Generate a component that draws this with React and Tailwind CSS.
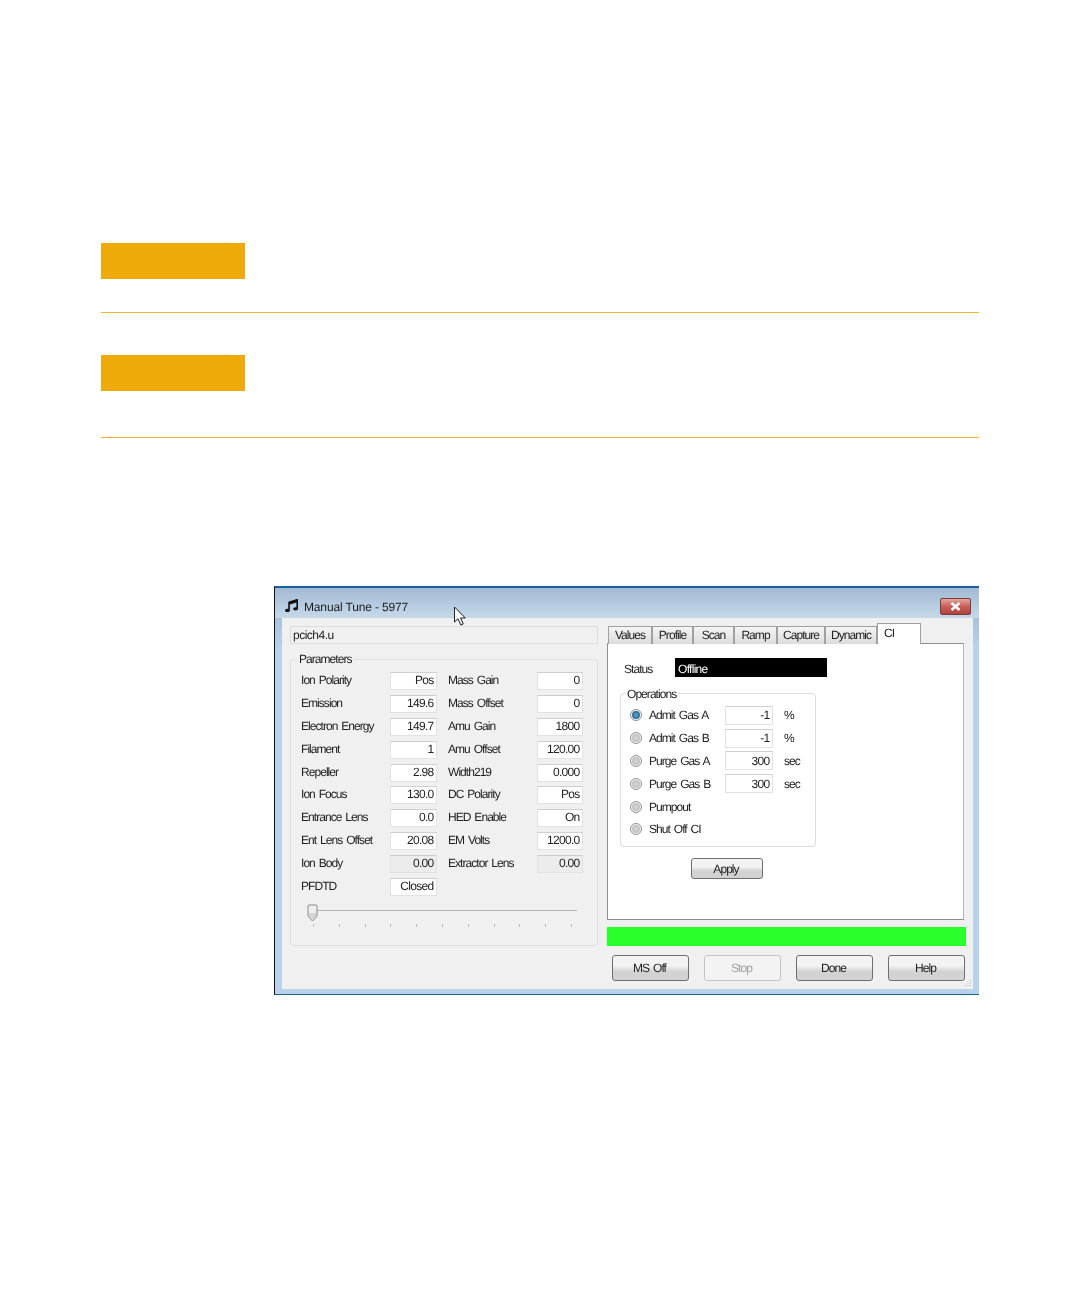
import { FaMusic } from "react-icons/fa";

const leftRows = [
  ["Ion Polarity", "Pos", "Mass Gain", "0"],
  ["Emission", "149.6", "Mass Offset", "0"],
  ["Electron Energy", "149.7", "Amu Gain", "1800"],
  ["Filament", "1", "Amu Offset", "120.00"],
  ["Repeller", "2.98", "Width219", "0.000"],
  ["Ion Focus", "130.0", "DC Polarity", "Pos"],
  ["Entrance Lens", "0.0", "HED Enable", "On"],
  ["Ent Lens Offset", "20.08", "EM Volts", "1200.0"],
  ["Ion Body", "0.00", "Extractor Lens", "0.00", true],
  ["PFDTD", "Closed"],
];

const tabs = [
  ["Values", "w-[44px]"],
  ["Profile", "w-[41px]"],
  ["Scan", "w-[41px]"],
  ["Ramp", "w-[43px]"],
  ["Capture", "w-[48px]"],
  ["Dynamic", "w-[52px]"],
];

const ops = [
  ["Admit Gas A", "-1", "%", true],
  ["Admit Gas B", "-1", "%"],
  ["Purge Gas A", "300", "sec"],
  ["Purge Gas B", "300", "sec"],
  ["Pumpout"],
  ["Shut Off CI"],
];

const Field = ({ value, disabled, width = "w-[47px]" }) => (
  <div
    className={`${width} h-[18px] flex items-center justify-end pr-[2.5px] tracking-[-0.7px] border border-[#e2e2e2] border-t-[#cfcfcf] ${
      disabled ? "bg-[#ececec] border-[#cccccc]" : "bg-white"
    }`}
  >
    {value}
  </div>
);

const Radio = ({ checked }) => (
  <div className="w-[12px] h-[12px] rounded-full border border-[#929292] bg-[#f4f4f4] flex items-center justify-center">
    <div
      className={`w-[8px] h-[8px] rounded-full ${
        checked ? "bg-radial from-[#5aa9d6] to-[#0f4f78]" : "bg-radial from-[#d8d8d8] to-[#b4b4b4]"
      }`}
    />
  </div>
);

const Button = ({ label, disabled, className = "w-[77px] h-[26px]" }) => (
  <div
    className={`${className} rounded-[3px] flex items-center justify-center pr-[2px] border ${
      disabled
        ? "border-[#c4c4c4] bg-[#f3f3f3] text-[#9f9f9f]"
        : "border-[#6f6f6f] bg-linear-to-b from-[#f3f3f3] from-40% to-[#d2d2d2] to-65%"
    }`}
  >
    {label}
  </div>
);

const App = () => {
  return (
    <div className="w-[1080px] h-[1296px] bg-white pt-[243px] pl-[101px] font-['Liberation_Sans',sans-serif]">
      <div className="w-[144px] h-[36px] bg-[#eeaa08]" />
      <div className="w-[878px] h-px bg-[#ecb634] mt-[33px]" />
      <div className="w-[144px] h-[36px] bg-[#eeaa08] mt-[42px]" />
      <div className="w-[878px] h-px bg-[#ecb634] mt-[46px]" />

      <div className="relative w-[705px] h-[409px] mt-[148px] ml-[173px] border-t-2 border-t-[#1d5f96] border-l border-l-[#111111] border-b border-b-[#1b6a8c] bg-linear-to-b from-[#a6bdd6] from-[5%] to-[#b9d1ea] to-[15%] text-[12px] tracking-[-0.95px] [word-spacing:1.5px] [text-rendering:geometricPrecision] text-[#222222] leading-none blur-[0.35px]">
        <div className="h-[30px] flex items-center pl-[10px] bg-linear-to-b from-[#a3bad4] to-[#c6d9ea]">
          <FaMusic className="w-[13px] h-[13px] text-[#111111] mt-[4px]" />
          <span className="ml-[6px] text-[12px] tracking-[-0.15px] [word-spacing:0px] text-[#1c1c1c] mt-[8px]">Manual Tune - 5977</span>
          <svg className="absolute z-10 left-[178px] top-[18px] w-[15px] h-[21px]" viewBox="0 0 15 21">
            <path d="M1.5 1 V16 L5 12.8 L7.8 19 L10.3 18 L7.6 12 H12.3 Z" fill="#f4f8fb" stroke="#222222" strokeWidth="1" />
          </svg>
          <div className="absolute left-[665px] top-[10px] w-[31px] h-[17px] rounded-[2px] border border-[#7b3a38] bg-linear-to-b from-[#e0a49c] via-[#c8605a] to-[#b0403c] flex items-center justify-center">
            <svg className="w-[11px] h-[9px]" viewBox="0 0 11 9">
              <path d="M1.5 1 L9.5 8 M9.5 1 L1.5 8" stroke="#ffffff" strokeWidth="2.4" />
            </svg>
          </div>
        </div>

        <div className="relative mx-[7px] w-[691px] h-[371px] bg-[#f0f0f0] flex">
          <div className="ml-[8px] w-[308px] pt-[8px]">
            <div className="h-[18px] border border-[#dcdcdc] flex items-center pl-[2px] tracking-[-0.5px]">pcich4.u</div>
            <div className="relative mt-[15px] h-[287px] rounded-[3px] border border-[#e0e0e0] pt-[10px] pl-[10px]">
              <span className="absolute left-[6px] -top-[7px] px-[2px] bg-[#f0f0f0]">Parameters</span>
              {leftRows.map((row) => (
                <div key={row[0]} className="flex items-center h-[22.8px]">
                  <div className="w-[89px] whitespace-nowrap pb-[2px]">{row[0]}</div>
                  <Field value={row[1]} disabled={row[4]} width="w-[47px] pb-[2px]" />
                  {row[2] && (
                    <>
                      <div className="w-[89px] ml-[11px] whitespace-nowrap pb-[2px]">{row[2]}</div>
                      <Field value={row[3]} disabled={row[4]} width="w-[46px] pb-[2px]" />
                    </>
                  )}
                </div>
              ))}
              <div className="relative h-[34px] ml-[12px] w-[264px] mt-[6px]">
                <div className="absolute left-0 right-0 top-[6px] h-px bg-[#b5b5b5]" />
                <svg className="absolute -left-[6px] top-0 w-[11px] h-[18px]" viewBox="0 0 11 18">
                  <path d="M1 2 Q1 1 2 1 H9 Q10 1 10 2 V12 L5.5 17 L1 12 Z" fill="#eeeeee" stroke="#8a8a8a" />
                  <path d="M2 9 H9 V12 L5.5 15.5 L2 12 Z" fill="#d4d4d4" />
                </svg>
                <div className="absolute left-0 w-[259px] top-[20px] flex justify-between">
                  {[0, 1, 2, 3, 4, 5, 6, 7, 8, 9, 10].map((t) => (
                    <div key={t} className="w-px h-[3px] bg-[#b8b8b8]" />
                  ))}
                </div>
              </div>
            </div>
          </div>

          <div className="ml-[9px] w-[359px] pt-[5px]">
            <div className="flex items-end h-[21px] pl-[1px]">
              {tabs.map(([label, w]) => (
                <div
                  key={label}
                  className={`${w} h-[18px] flex items-center justify-center pb-[2px] border border-b-0 border-[#a0a0a0] bg-linear-to-b from-[#f4f4f4] to-[#dcdcdc]`}
                >
                  {label}
                </div>
              ))}
              <div className="relative z-10 w-[44px] h-[21px] border border-b-0 border-[#a0a0a0] bg-white pl-[6px] pt-[3px]">CI</div>
            </div>
            <div className="w-[357px] h-[277px] -mt-px bg-white border border-[#8e8e8e] border-r-[#b4b4b4] pt-[15px]">
              <div className="flex items-center pl-[16px]">
                <div className="w-[51px] mt-[1px]">Status</div>
                <div className="w-[152px] h-[19px] bg-black text-white flex items-center pl-[3px] pt-[2px] -mt-[1px] tracking-[-0.7px]">Offline</div>
              </div>
              <div className="relative mt-[16px] ml-[12px] w-[196px] h-[154px] rounded-[4px] border border-[#dcdcdc] pt-[10px] pl-[9px]">
                <span className="absolute left-[4px] -top-[6px] px-[2px] bg-white">Operations</span>
                {ops.map(([label, value, unit, checked]) => (
                  <div key={label} className="flex items-center h-[22.8px]">
                    <Radio checked={checked} />
                    <div className="w-[76px] ml-[7px] whitespace-nowrap">{label}</div>
                    {value && <Field value={value} width="w-[48px] h-[19px]" />}
                    {unit && <div className="ml-[11px]">{unit}</div>}
                  </div>
                ))}
              </div>
              <div className="mt-[11px] ml-[83px]">
                <Button label="Apply" className="w-[72px] h-[21px]" />
              </div>
            </div>
            <div className="w-[359px] h-[19px] mt-[7px] bg-[#2bff2b]" />
            <div className="flex gap-[15px] pl-[5px] mt-[9px]">
              <Button label="MS Off" />
              <Button label="Stop" disabled />
              <Button label="Done" />
              <Button label="Help" />
            </div>
          </div>

          <svg className="absolute right-[1px] bottom-[2px] w-[8px] h-[8px]" viewBox="0 0 8 8">
            <path d="M6 1h1v1H6zM3.5 3.5h1v1h-1zM6 3.5h1v1H6zM1 6h1v1H1zM3.5 6h1v1h-1zM6 6h1v1H6z" fill="#b0b0b0" />
          </svg>
        </div>
      </div>
    </div>
  );
};

export default App;
